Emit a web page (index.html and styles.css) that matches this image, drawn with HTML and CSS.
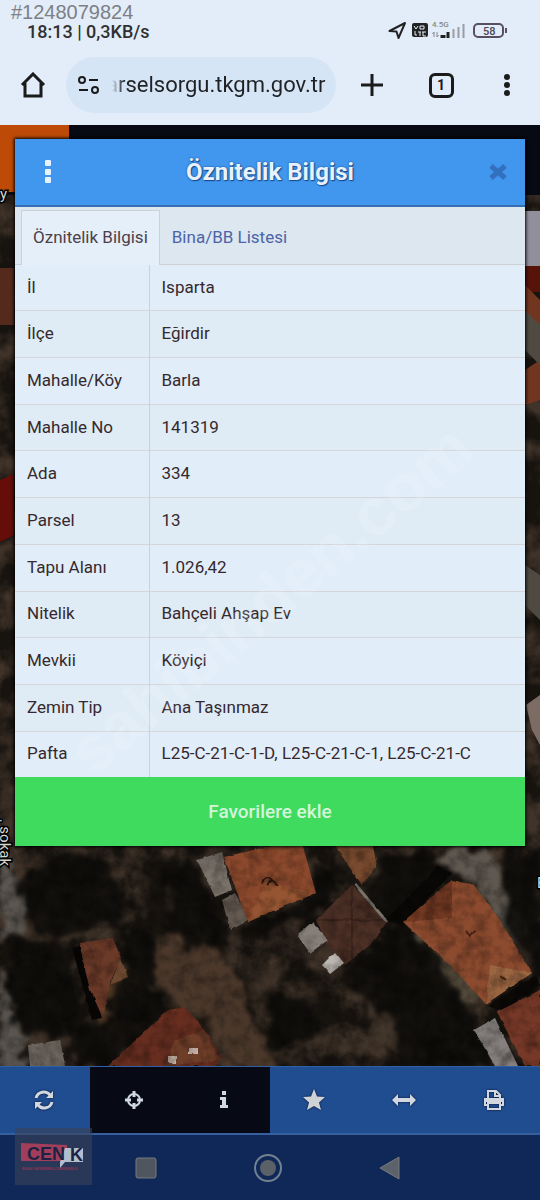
FILE: index.html
```html
<!DOCTYPE html>
<html lang="tr">
<head>
  <meta charset="UTF-8">
  <meta name="viewport" content="width=device-width, initial-scale=1">
  <title>Öznitelik Bilgisi</title>
  <link rel="stylesheet" href="styles.css">
</head>
<body>

  <header class="browser">
    <span class="listing-no">#1248079824</span>
    <div class="status">
      <span>18:13 | 0,3KB/s</span>
      <svg width="120" height="24" viewBox="0 0 120 24" fill="none" stroke="#222" stroke-width="2">
        <path d="M1.500 12 17 4 10.500 19 8.500 12.500Z" stroke-linejoin="round"/>
        <rect x="24" y="4" width="16" height="14" rx="2" fill="#222" stroke="none"/>
        <path d="M26 7l2 3 2-3M32 7h4v3h-4zM27 12v4h2M30 13h3M32 13v4M34 13h4M35 13v4h3" stroke="#e4edf8" stroke-width="1"/>
        <text x="44" y="8" class="net">4.5G</text>
        <path d="M46 18v-5M44.500 15l1.500-2M49 13v5M50.500 16l-1.500 2" stroke="#888" stroke-width="1"/>
        <path d="M54 19v-3M56 19v-3M60 19v-6" stroke-width="3"/>
        <path d="M65.500 19v-9M70.500 19V8M75.500 19V5" stroke="#9a9da5"/>
        <rect x="86" y="5" width="29" height="13" rx="4" stroke="#5a4f60"/>
        <path d="M118 9v5" stroke="#5a4f60"/>
        <text x="95" y="16" class="battery">58</text>
      </svg>
    </div>
    <div class="address">
      <button aria-label="Ana sayfa">
        <svg width="26" height="26" viewBox="0 0 26 26" fill="none" stroke="#1b1b1b" stroke-width="3"><path d="M2 13 13 2l11 11M5 11v13h16V11"/></svg>
      </button>
      <div class="url">
        <svg width="22" height="18" viewBox="0 0 22 18" fill="none" stroke="#1b1b1b" stroke-width="2"><circle cx="4" cy="4" r="3"/><path d="M11 4h9M1 14h9"/><circle cx="17" cy="14" r="3"/></svg>
        <input type="text" value="arselsorgu.tkgm.gov.tr" aria-label="Adres">
      </div>
      <button aria-label="Yeni sekme">
        <svg width="22" height="22" viewBox="0 0 22 22" stroke="#1b1b1b" stroke-width="3"><path d="M11 0v22M0 11h22"/></svg>
      </button>
      <button class="tab-count" aria-label="Sekmeler"><span>1</span></button>
      <button aria-label="Menü">
        <svg width="8" height="24" viewBox="0 0 8 24" fill="#1b1b1b"><circle cx="4" cy="4" r="3"/><circle cx="4" cy="12" r="3"/><circle cx="4" cy="20" r="3"/></svg>
      </button>
    </div>
  </header>

  <main class="map">
    <svg class="satellite" viewBox="0 125 540 941" preserveAspectRatio="xMidYMin slice">
      <defs>
        <filter id="rough" x="-10%" y="-10%" width="120%" height="120%" color-interpolation-filters="sRGB">
          <feTurbulence type="fractalNoise" baseFrequency="0.06" numOctaves="4" seed="3"/>
          <feDisplacementMap in="SourceGraphic" scale="26" xChannelSelector="R" yChannelSelector="G"/>
          <feGaussianBlur stdDeviation="2"/>
        </filter>
        <filter id="edge" color-interpolation-filters="sRGB">
          <feTurbulence type="fractalNoise" baseFrequency="0.12" numOctaves="2" seed="8"/>
          <feDisplacementMap in="SourceGraphic" scale="3" xChannelSelector="R" yChannelSelector="G"/>
        </filter>
        <filter id="ground" x="0" y="0" width="100%" height="100%" color-interpolation-filters="sRGB">
          <feTurbulence type="fractalNoise" baseFrequency="0.035" numOctaves="5" seed="12"/>
          <feColorMatrix values="0 0 0 0 .25  0 0 0 0 .2  0 0 0 0 .16  3 0 0 0 -1.1"/>
        </filter>
        <filter id="grain" x="0" y="0" width="100%" height="100%" color-interpolation-filters="sRGB">
          <feTurbulence type="fractalNoise" baseFrequency="0.08" numOctaves="4" seed="5"/>
          <feColorMatrix values="0 0 0 0 0  0 0 0 0 0  0 0 0 0 0  0 2 0 0 -.75"/>
        </filter>
      </defs>
      <rect y="125" width="540" height="941" fill="#17130f"/>
      <rect y="125" width="540" height="941" filter="url(#ground)"/>

      <!-- bare ground and paths -->
      <g filter="url(#rough)">
        <path d="M0 850 8 855 26 905 24 935 6 942 0 945Z" fill="#5b5650"/>
        <path d="M0 965 10 985 12 1010 24 1030V1070H0Z" fill="#5a554f"/>
        <path d="M160 935 205 935 225 955 245 1000 275 1070H225L205 1020 175 1005 158 985Z" fill="#4b382b"/>
        <path d="M125 975 115 1030 95 1020 90 990Z" fill="#5a412b"/>
        <path d="M435 850 485 848 503 870 510 900 530 930 515 938 500 920 470 880 450 870Z" fill="#5f5850"/>
        <path d="M410 925 440 930 485 995 478 1012 440 985Z" fill="#554b3c"/>
        <path d="M365 1000 420 1040 410 1060 370 1035Z" fill="#42362b"/>
      </g>

      <!-- trees -->
      <g fill="#0e0d0a" fill-opacity=".88" filter="url(#rough)">
        <path d="M15 880 45 865 62 852 110 860 125 925 85 930 60 940 30 925Z"/>
        <path d="M10 935 75 945 80 1000 70 1040 18 1030 8 980Z"/>
        <path d="M120 925 155 935 162 975 155 990 130 975Z"/>
        <ellipse cx="130" cy="1000" rx="24" ry="20"/>
        <path d="M165 860 200 865 225 940 185 952 168 915Z"/>
        <path d="M72 1030 160 995 170 1010 105 1070 70 1066Z"/>
        <path d="M310 850 340 890 325 905 270 935 240 930 310 895Z"/>
        <path d="M380 860 435 850 445 870 400 930 365 900Z"/>
        <path d="M400 925 430 940 460 1000 480 1020 400 1020 350 985 345 965Z"/>
        <path d="M500 850 540 850V990L500 1010 530 975 535 960 505 920 505 870Z"/>
        <path d="M270 990 310 1000 320 1040 270 1050Z"/>
        <path d="M400 1020 475 1020 500 1066 390 1066Z"/>
      </g>

      <!-- roofs -->
      <g filter="url(#edge)">
        <path d="M72 948 82 945 102 1018 92 1020Z" fill="#080706"/>
        <path d="M79 943 113 938 121 958 110 983 103 1018 90 990Z" fill="#6b3a28"/>
        <path d="M121 958 128 977 110 985Z" fill="#6d482f"/>
        <path d="M108 1066 168 1010 185 1007 205 1030 222 1058 215 1066Z" fill="#672e20"/>
        <path d="M175 1040 205 1030 220 1060 165 1066Z" fill="#6f3e29"/>
        <path d="M189 1048h9v6h-9zM168 1056h9v7h-9z" fill="#c6b4a8"/>
        <path d="M28 1045 60 1040 65 1066H30Z" fill="#6a645c"/>
        <path d="M197 860 222 852 232 890 215 897Z" fill="#7b746b"/>
        <path d="M222 900 235 893 250 920 230 930Z" fill="#655b52"/>
        <path d="M224 857 270 846H303L316 893 270 912 248 922Z" fill="#8a482c"/>
        <path d="M248 922 266 882 316 893 270 912Z" fill="#955432"/>
        <path d="M262 884c2-6 6-8 10-4l6 5M272 880l-5 5" fill="none" stroke="#35190f" stroke-width="2"/>
        <path d="M335 846H373L377 866 362 885 350 868Z" fill="#784a2e"/>
        <path d="M316 920 352 885 387 922 370 945 345 965 328 945Z" fill="#4c3026"/>
        <path d="M352 886V963M317 920H386" fill="none" stroke="#331d16" stroke-width="1"/>
        <path d="M355 884 387 922" fill="none" stroke="#7a746a" stroke-width="3"/>
        <path d="M297 935 312 922 328 940 310 953Z" fill="#857f78"/>
        <path d="M322 965 335 952 344 963 330 974Z" fill="#bcb7b0"/>
        <path d="M386 920 438 866 452 873 403 925Z" fill="#090806"/>
        <path d="M403 922 452 880 475 885 500 920 532 973 486 1004 450 965Z" fill="#8c4b2f"/>
        <path d="M403 922 452 880V918Z" fill="#713822"/>
        <path d="M490 965 532 973 487 1003Z" fill="#9a6541"/>
        <path d="M466 931l4 5 5-5M501 976l5 4" fill="none" stroke="#4a2314" stroke-width="2"/>
        <path d="M488 1005 534 976 540 985 500 1013Z" fill="#0c0907"/>
        <path d="M497 1012 540 990V1066H525Z" fill="#773927"/>
        <path d="M474 1030 495 1018 518 1066H495Z" fill="#857f7d"/>
      </g>
      <rect y="846" width="540" height="220" filter="url(#grain)" opacity=".35"/>

      <!-- strips beside the dialog -->
      <path d="M0 268H14V325H0Z" fill="#532a1c"/>
      <path d="M0 480 14 474V535L0 542Z" fill="#650d08"/>
      <path d="M525 266h15v26h-15z" fill="#561409"/>
      <path d="M525 285 540 300V330L525 345ZM525 370 540 360V400L525 405Z" fill="#713520"/>
      <path d="M525 310 540 325V365L525 350ZM525 565 540 575V620L525 605Z" fill="#4e4941"/>
      <path d="M526 705 540 695V745L532 730Z" fill="#7c6c63"/>

      <!-- page header behind the dialog -->
      <path d="M0 125H540V195H0Z" fill="#070913"/>
      <path d="M0 125H69V192H0Z" fill="#bd4b07"/>
      <path d="M525 211h15v55h-15z" fill="#918f9c"/>
      <text x="0" y="199" class="street">y</text>
      <text x="866" y="0" class="street" text-anchor="end" transform="rotate(90)">. sokak</text>
      <text x="537" y="888" class="street">E</text>
    </svg>

    <section class="dialog">
      <header class="dialog-head">
        <button aria-label="Seçenekler">
          <svg width="8" height="24" viewBox="0 0 8 24" fill="#e6f2ff"><rect x="1" y="0" width="6" height="6" rx="1"/><rect x="1" y="9" width="6" height="6" rx="1"/><rect x="1" y="17" width="6" height="6" rx="1"/></svg>
        </button>
        <h1>Öznitelik Bilgisi</h1>
        <button aria-label="Kapat">
          <svg width="18" height="16" viewBox="0 0 18 16" stroke="#3270be" stroke-width="5"><path d="M2 2l14 12M16 2 2 14"/></svg>
        </button>
      </header>
      <nav class="tabs">
        <a class="active" href="#oznitelik">Öznitelik Bilgisi</a>
        <a href="#bina">Bina/BB Listesi</a>
      </nav>
      <table class="attributes" id="oznitelik">
        <tbody>
          <tr><th scope="row">İl</th><td>Isparta</td></tr>
          <tr><th scope="row">İlçe</th><td>Eğirdir</td></tr>
          <tr><th scope="row">Mahalle/Köy</th><td>Barla</td></tr>
          <tr><th scope="row">Mahalle No</th><td>141319</td></tr>
          <tr><th scope="row">Ada</th><td>334</td></tr>
          <tr><th scope="row">Parsel</th><td>13</td></tr>
          <tr><th scope="row">Tapu Alanı</th><td>1.026,42</td></tr>
          <tr><th scope="row">Nitelik</th><td>Bahçeli Ahşap Ev</td></tr>
          <tr><th scope="row">Mevkii</th><td>Köyiçi</td></tr>
          <tr><th scope="row">Zemin Tip</th><td>Ana Taşınmaz</td></tr>
          <tr><th scope="row">Pafta</th><td>L25-C-21-C-1-D, L25-C-21-C-1, L25-C-21-C</td></tr>
        </tbody>
      </table>
      <button class="favorite">Favorilere ekle</button>
      <span class="watermark">sahibinden.com</span>
    </section>
  </main>

  <div class="toolbar">
    <button aria-label="Yenile">
      <svg width="22" height="22" viewBox="0 0 22 22" fill="none" stroke="#d3d8e0" stroke-width="3"><path d="M3 9a8 8 0 0 1 14-3M19 13a8 8 0 0 1-14 3"/><path d="M20 2v7h-7ZM2 20v-7h7Z" fill="#d3d8e0" stroke="none"/></svg>
    </button>
    <button class="dark" aria-label="Konum">
      <svg width="20" height="20" viewBox="0 0 20 20" fill="none" stroke="#d3d8e0" stroke-width="2"><circle cx="10" cy="10" r="6"/><path d="M10 1v6M10 13v6M1 10h6M13 10h6" stroke-width="3"/></svg>
    </button>
    <button class="dark" aria-label="Bilgi">
      <svg width="10" height="20" viewBox="0 0 10 20" fill="#d3d8e0"><path d="M3 1h4v4H3ZM1 7h6v8h2v3H1v-3h2v-5H1Z"/></svg>
    </button>
    <button aria-label="Favoriler">
      <svg width="22" height="22" viewBox="0 0 22 22" fill="#d0d3d6"><path d="M11 0 14 7.500 22 8 16 13.500 18 21 11 17 4 21 6 13.500 0 8 8 7.500Z"/></svg>
    </button>
    <button aria-label="Ölçüm">
      <svg width="24" height="12" viewBox="0 0 24 12" fill="#d3d8e0"><path d="M0 6 6 0V4H18V0L24 6 18 12V8H6V12Z"/></svg>
    </button>
    <button aria-label="Yazdır">
      <svg width="22" height="20" viewBox="0 0 22 20" fill="none" stroke="#d3d8e0" stroke-width="2"><path d="M5 9V1h8l4 4v4M12 1v5h5"/><path d="M5 15H2V9h18v6h-3M2 11h18"/><path d="M5 13h12v6H5z"/></svg>
    </button>
  </div>

  <footer class="system-nav">
    <svg class="cenk" viewBox="0 0 77 57" width="77" height="57">
      <rect width="77" height="57" fill="#3a4358" opacity=".6"/>
      <path d="M6 15 52 17V33H6Z" fill="#a03e5b"/>
      <path d="M50 20H68V34H50L45 40V34Z" fill="#b4bdce"/>
      <text x="12" y="32" class="cenk-name">CEN</text>
      <text x="55" y="33" class="cenk-name">K</text>
      <text x="7" y="42" class="cenk-sub">EMLAK GAYRİMENKUL DANIŞMANLIK</text>
    </svg>
    <button aria-label="Son uygulamalar">
      <svg width="22" height="22" viewBox="0 0 22 22"><rect x="1" y="1" width="20" height="20" rx="2" fill="#50565f" stroke="#777b80"/></svg>
    </button>
    <button aria-label="Ana ekran">
      <svg width="28" height="28" viewBox="0 0 28 28"><circle cx="14" cy="14" r="13" fill="none" stroke="#748290" stroke-width="2"/><circle cx="14" cy="14" r="8" fill="#5c6067"/></svg>
    </button>
    <button aria-label="Geri">
      <svg width="20" height="24" viewBox="0 0 20 24"><path d="M0 12 19 1V23Z" fill="#5c626a" stroke="#777b80"/></svg>
    </button>
  </footer>

</body>
</html>
```

FILE: styles.css
```css
* {
  box-sizing: border-box;
}
body {
  margin: 0;
  min-height: 100vh;
  display: flex;
  flex-direction: column;
  font-family: Roboto, "Noto Sans", sans-serif;
  color: #35292e;
  background: #0f2857;
}
button {
  border: 0;
  padding: 0;
  background: none;
  font-family: inherit;
  display: flex;
  align-items: center;
  justify-content: center;
}

/* browser chrome */
.browser {
  position: relative;
  padding: 12px 0;
  background: #e2edf9;
}
.listing-no {
  position: absolute;
  left: 11px;
  top: 0;
  font: 20px/24px "Liberation Sans", Arial, sans-serif;
  color: #7d8084;
}
.status {
  display: flex;
  justify-content: space-between;
  align-items: center;
  height: 38px;
  padding: 0 32px 0 27px;
  margin-bottom: 7px;
  font-size: 18px;
  font-weight: 500;
  color: #303030;
}
.net {
  font-size: 8px;
  fill: #888;
  stroke: none;
}
.battery {
  font-size: 11px;
  fill: #4d4552;
  stroke: none;
}
.address {
  display: grid;
  grid-template-columns: 66px 1fr 72px 66px 66px;
  height: 56px;
}
.url {
  display: flex;
  align-items: center;
  gap: 12px;
  min-width: 0;
  padding: 0 8px 0 12px;
  border-radius: 28px;
  background: #d6e5f6;
}
.url svg {
  flex: none;
}
.url input {
  flex: 1;
  min-width: 0;
  border: 0;
  padding: 0;
  background: none;
  font: 22px/30px Roboto, sans-serif;
  color: #1f2124;
  text-indent: -6px;
  -webkit-mask-image: linear-gradient(to right, transparent, #000 12px);
  mask-image: linear-gradient(to right, transparent, #000 12px);
}
.tab-count span {
  width: 25px;
  height: 25px;
  border: 3px solid #1b1b1b;
  border-radius: 6px;
  font: bold 14px/19px Roboto, sans-serif;
  color: #1b1b1b;
}

/* map */
.map {
  position: relative;
  flex: 1;
  padding: 14px 15px;
  overflow: hidden;
}
.satellite {
  position: absolute;
  inset: 0;
  width: 100%;
  height: 100%;
}
.street {
  font-size: 15px;
  fill: #d8d5d0;
  stroke: #000;
  stroke-width: 3px;
  paint-order: stroke;
}

/* dialog */
.dialog {
  position: relative;
  overflow: hidden;
  background: #e1edf9;
  box-shadow: 0 0 3px 1px #000;
}
.dialog-head {
  display: grid;
  grid-template-columns: 66px 1fr 54px;
  align-items: center;
  height: 68px;
  background: #4196ee;
  border-bottom: 2px solid #356fb1;
}
.dialog-head h1 {
  margin: 0;
  padding-right: 12px;
  text-align: center;
  font-size: 24px;
  line-height: 30px;
  font-weight: bold;
  color: #e8f2fd;
  text-shadow: 0 0 2px #174a88, 1px 1px 1px #174a88;
}
.tabs {
  display: flex;
  height: 58px;
  padding: 3px 6px 0;
  background: #dce7f0;
  border-bottom: 1px solid #cfcfd6;
}
.tabs a {
  padding: 0 12px;
  font-size: 17px;
  line-height: 54px;
  color: #4c63a8;
  text-decoration: none;
}
.tabs .active {
  margin-bottom: -1px;
  padding: 0 11px;
  border: 1px solid #cfcfd6;
  border-width: 1px 1px 0;
  background: #e4effa;
  color: #4d4049;
  line-height: 52px;
}
.attributes {
  width: 100%;
  height: 512px;
  border-collapse: collapse;
  font-size: 17px;
  line-height: 20px;
}
.attributes th,
.attributes td {
  padding: 0 12px 2px;
  text-align: left;
  font-weight: 400;
}
.attributes th {
  width: 134px;
  border-right: 1px solid #cdd0d9;
}
.attributes tr + tr {
  border-top: 1px solid #d5d5da;
}
.attributes tr:nth-child(even) {
  background: #dfebf5;
}
.favorite {
  width: 100%;
  height: 69px;
  background: #3edb5e;
  color: #d3f5da;
  font-size: 19px;
  font-weight: 500;
}
.watermark {
  position: absolute;
  left: 50%;
  top: 65%;
  font: bold 66px/66px "Liberation Sans", Arial, sans-serif;
  color: #fff;
  opacity: .15;
  transform: translate(-50%, -50%) rotate(-40deg);
  pointer-events: none;
}

/* bottom bars */
.toolbar {
  display: grid;
  grid-template-columns: repeat(6, 1fr);
  height: 69px;
  background: #204c90;
  border-top: 1px solid #2f5fa6;
  border-bottom: 2px solid #355f9f;
}
.toolbar button {
  padding-right: 3px;
}
.toolbar .dark {
  background: #070a14;
}
.toolbar svg {
  filter: drop-shadow(0 0 1px #071630);
}
.system-nav {
  position: relative;
  display: grid;
  grid-template-columns: repeat(3, 122px);
  justify-content: center;
  height: 65px;
  padding-right: 4px;
  background: #0f2857;
}
.cenk {
  position: absolute;
  left: 15px;
  bottom: 15px;
}
.cenk-name {
  font: bold 18px "Liberation Sans", Arial, sans-serif;
  fill: #1b2243;
}
.cenk-sub {
  font: bold 3px "Liberation Sans", Arial, sans-serif;
  fill: #963452;
}
```
